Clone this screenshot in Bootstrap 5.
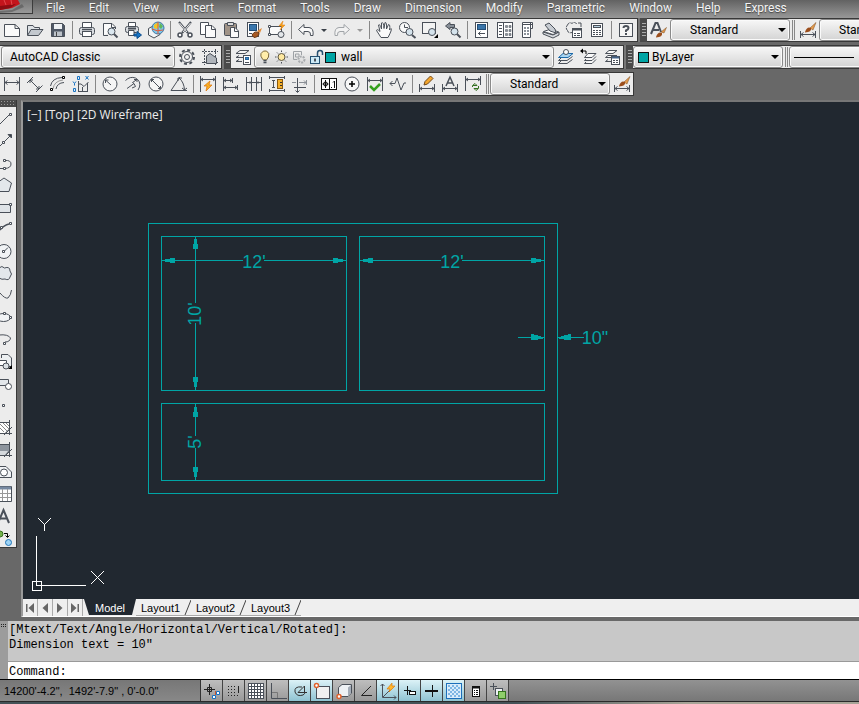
<!DOCTYPE html>
<html lang="en">
<head>
<meta charset="utf-8">
<meta name="viewport" content="width=device-width, initial-scale=1">
<title>AutoCAD Classic</title>
<link href="https://cdn.jsdelivr.net/npm/bootstrap@5.3.0/dist/css/bootstrap.min.css" rel="stylesheet">
<style>
:root{--ink:#4a5059;--panel:#ececec;--desk:#686868;--wall:#00a5a5;--paper:#212830}
body{font-family:Roboto,"Liberation Sans",sans-serif;font-size:12px;line-height:16px;color:#000;background:var(--desk)}
button{border:0;background:none;padding:0;color:inherit;font:inherit}
svg{display:block;flex:none}
.menubar{height:18px;background:linear-gradient(#626262,#989898)}
.menubar nav{gap:24px;padding-left:13px}
.menubar nav a{color:#f4f4f4;text-decoration:none;line-height:16px;text-shadow:0 1px 1px #444}
.logo-btn{width:33px;height:14px;border-right:1px solid #3c3c3c;border-bottom:1px solid #3c3c3c;background:linear-gradient(#777,#999)}
.bars{gap:3px}
.bar-row{height:24px}
.tool-panel{height:24px;background:var(--panel);border-top:1px solid #383838;border-bottom:1px solid #383838}
.tool-panel.closed{border-right:1px solid #383838}
.tool-panel.inset-start{padding-left:1px}
.tool-btn{width:23px;height:22px;display:flex;align-items:center;justify-content:center;flex:none}
.tool-btn svg,.status-btn svg,.draw-btn svg,.layer-state svg{fill:none;stroke:var(--ink);stroke-width:1}
.tool-btn svg{width:20px;height:20px}
.tool-drop{width:13px;height:22px;display:flex;align-items:center;justify-content:center;flex:none}
.tool-drop::after{content:"";border:3px solid transparent;border-top-color:#3a4048;border-bottom:0}
.tool-drop.off::after{border-top-color:#999}
.rule{width:6px;flex:none;display:flex;justify-content:center;align-items:center}
.rule::after{content:"";width:1px;height:18px;background:#888}
.rule.double::after{width:3px;height:20px;background:none;border-left:1px solid #888;border-right:1px solid #888}
.grip{width:9px;flex:none;height:24px;padding:4px 2px;background:#4a4a4a;border-left:2px solid #777;background-clip:padding-box}
.grip::after{content:"";display:block;width:4px;height:15px;background:radial-gradient(circle,#aaa 0 28%,transparent 30%) 0 0/2px 3px}
.combo{position:relative;height:22px;flex:none}
.combo select{appearance:none;width:100%;height:22px;border:1px solid #8a8a8a;border-radius:3px;background:linear-gradient(#f7f7f7,#e4e4e4 55%,#d4d4d4);box-shadow:inset 0 0 0 1px #fafafa;font:inherit;line-height:16px;color:#000;padding:0 0 0 8px}
.combo::after{content:"";position:absolute;right:4px;top:9px;border:4px solid transparent;border-top:4px solid #000;border-bottom:0;pointer-events:none}
.combo.w-md{width:120px}.combo.w-lg{width:150px}.combo.w-ws{width:174px}.combo.w-layer{width:300px}
.combo.mid select{padding-left:19px}
.combo.w-layer select{padding-left:86px}
.combo.tint select{padding-left:18px}
.layer-state{position:absolute;left:3px;top:3px;display:flex;gap:1px;pointer-events:none}
.swatch{position:absolute;left:5px;top:6px;width:11px;height:11px;background:var(--wall);border:1px solid #111;pointer-events:none}
.w-layer .swatch{left:71px}
.sample{position:absolute;left:5px;width:60px;top:11px;height:1px;background:#000;pointer-events:none}
.draw-bar{width:17px;background:var(--panel);border-right:1px solid #383838;border-bottom:1px solid #383838}
.draw-grip{height:7px;background:radial-gradient(circle,#999 0 28%,transparent 30%) 0 0/3px 3px #4a4a4a}
.draw-btn{height:22px;overflow:hidden;text-align:left}
.work{padding-top:4px;gap:4px;min-height:0}
.sheet{border:solid #9a9a9a;border-width:2px 0 1px 2px;border-top-color:#777;border-bottom-color:#fff;min-width:0}
.sheet,.canvas{min-height:0}
.canvas{background:var(--paper);position:relative;overflow:hidden}
.canvas .plan{width:100%;height:100%;position:absolute;left:0;top:0}
.ucs{position:absolute;left:8px;bottom:8px}
.view-label{position:relative;z-index:1;color:#ececec;font-family:"Open Sans","Noto Sans",sans-serif;font-size:12px;padding:5px 4px}
.tabs{height:17px;background:#efefef;font-family:"Liberation Sans",Arial,sans-serif;font-size:11px;line-height:18px}
.step{width:15px;height:17px;border-right:1px solid #aaa;display:flex;align-items:center;justify-content:center}
.tab-model{width:52px;height:16px;background:var(--paper);color:#fff;clip-path:polygon(0 0,100% 0,48px 100%,5px 100%);margin-left:1px}
.tab-layout{width:55px;height:17px;padding-left:5px;display:flex;justify-content:space-between;border-bottom:1px solid #aaa}
.prompt{margin-top:4px;background:#9c9c9c;font-family:"Liberation Mono","Courier New",monospace;font-size:12px;line-height:15px}
.prompt-grip{width:8px;padding-top:3px}
.prompt-grip::after{content:"";display:block;width:6px;height:4px;background:conic-gradient(#222 25%,transparent 0) 0 0/2px 2px}
.history{height:41px;background:#c8c8c8;border-bottom:1px solid #999;padding:2px 1px 0}
.entry{height:17px;background:#fff;padding-left:1px;line-height:21px}
.entry input{border:0;outline:0;padding:0;height:16px;background:transparent;font:inherit}
.status{height:23px;border-top:1px solid #000;border-bottom:1px solid #2a2a2a;background:linear-gradient(#929292,#777)}
.coords{width:201px;font-family:"Liberation Sans",Arial,sans-serif;font-size:11px;line-height:23px;padding-left:4px;background:linear-gradient(#777,#888);border-right:1px solid #333;white-space:pre}
.status-btn{width:22px;height:21px;border-right:1px solid #444;background:linear-gradient(#bebebe,#999);display:flex;align-items:center;justify-content:center}
.status-btn.on{background:linear-gradient(#dcf2f7,#8fc3d2)}
.edge{height:2px;background:linear-gradient(90deg,#445257 0 60%,#a7a497 80%)}
</style>
<script src="https://cdn.jsdelivr.net/npm/bootstrap@5.3.0/dist/js/bootstrap.bundle.min.js"></script>
</head>
<body class="vh-100 d-flex flex-column overflow-hidden">

<header class="menubar d-flex flex-shrink-0">
  <button class="logo-btn" aria-label="Application menu"><svg width="32" height="13"><path d="M0 11 12 10 22 4 24 7 12 12 0 13Z" fill="#555" opacity=".6"/><path d="M0 0H18L20 4 12 8 0 10Z" fill="#c4151c"/><path d="M0 6 8 5 16 4 10 8 0 10Z" fill="#8d0d12"/><path d="M4 0 6 5M11 0 12 5" stroke="#e4484d"/></svg></button>
  <nav class="d-flex" aria-label="Main menu">
    <a href="#">File</a><a href="#">Edit</a><a href="#">View</a><a href="#">Insert</a><a href="#">Format</a><a href="#">Tools</a><a href="#">Draw</a><a href="#">Dimension</a><a href="#">Modify</a><a href="#">Parametric</a><a href="#">Window</a><a href="#">Help</a><a href="#">Express</a>
  </nav>
</header>

<div class="bars d-flex flex-column flex-shrink-0">
  <div class="bar-row d-flex overflow-hidden">
    <div class="tool-panel closed d-flex flex-shrink-0" role="toolbar" aria-label="Standard">
      <button class="tool-btn" aria-label="New"><svg viewBox="0 0 20 20"><path d="M2.500 4.500H13L17.500 8.500V16.500H2.500Z" fill="#fafafa"/><path d="M13 4.500V8.500H17.500"/></svg></button>
      <button class="tool-btn" aria-label="Open"><svg viewBox="0 0 20 20"><path d="M2.500 15V5.500H8L9.500 7.500H14.500V9" fill="#dde1e5"/><path d="M2.500 15.500 6 9.500H18L13.500 15.500Z" fill="#c3c8ce"/></svg></button>
      <button class="tool-btn" aria-label="Save"><svg viewBox="0 0 20 20"><path d="M3.500 3.500H14.500L16.500 5.500V16.500H3.500Z" fill="#4f5866"/><path d="M6 4H14V9H6Z" fill="#eef1f4" stroke="none"/><path d="M6 11.500H14V16H6Z" fill="#bcc2c9" stroke="none"/><path d="M8.500 12V16" stroke="#444"/></svg></button>
      <span class="rule"></span>
      <button class="tool-btn" aria-label="Plot"><svg viewBox="0 0 20 20"><path d="M5.500 8V2.500H14.500V8" fill="#fff"/><rect x="2.500" y="7.500" width="15" height="7" rx="2" fill="#dadde1"/><rect x="5.500" y="11.500" width="9" height="5" fill="#fff"/><path d="M5 9.500H15" stroke-width="1.500"/></svg></button>
      <button class="tool-btn" aria-label="Plot preview"><svg viewBox="0 0 20 20"><path d="M3.500 15.500V3.500H12L15.500 7V9" fill="#fafafa"/><path d="M3.500 15.500H8M11.500 4V7.500H15"/><circle cx="11.500" cy="11.500" r="3.500" fill="#dbe7ef"/><path d="M14 14 17.500 17.500" stroke-width="2"/></svg></button>
      <button class="tool-btn" aria-label="Publish"><svg viewBox="0 0 20 20"><path d="M5.500 7V2.500H12.500V7" fill="#fff"/><rect x="2.500" y="6.500" width="13" height="6" rx="2" fill="#dadde1"/><path d="M5.500 10.500H11V15.500H5.500Z" fill="#fff"/><path d="M5 8.500H13" stroke-width="2"/><path d="M11 14H14V11.500L18.500 15 14 18.500V16H11Z" fill="#1673c4" stroke="#0b4c8c"/></svg></button>
      <button class="tool-btn" aria-label="3D DWF"><svg viewBox="0 0 20 20"><path d="M2.500 8.500 8 5.500 14 8.500V14.500L8 18 2.500 15Z" fill="#f2f4f6"/><circle cx="12" cy="8" r="6" fill="#7cc7ea" stroke="#4576a0"/><path d="M8 5Q12 1 13 5L11 9 8 8Z" fill="#f2c526" stroke="none"/><path d="M14 3 17 6 15 9 13 7Z" fill="#5fb65a" stroke="none"/><path d="M6 9Q11 12 17 10M12 2V14" stroke="#e05a3a"/></svg></button>
      <span class="rule"></span>
      <button class="tool-btn" aria-label="Cut"><svg viewBox="0 0 20 20"><path d="M4 2 13 13M16 2 7 13" stroke-width="2"/><path d="M4.500 3 12 12M15.500 3 8 12" stroke="#eee"/><circle cx="5" cy="15" r="2" fill="#fff" stroke-width="1.500"/><circle cx="15" cy="15" r="2" fill="#fff" stroke-width="1.500"/></svg></button>
      <button class="tool-btn" aria-label="Copy"><svg viewBox="0 0 20 20"><path d="M2.500 2.500H10.500V14.500H2.500Z" fill="#fff"/><path d="M7.500 5.500H14L17.500 9V17.500H7.500Z" fill="#fafafa"/><path d="M13.500 5.500V9.500H17"/></svg></button>
      <button class="tool-btn" aria-label="Paste"><svg viewBox="0 0 20 20"><rect x="3.500" y="3.500" width="12" height="12" rx="1" fill="#a09387"/><path d="M6.500 2.500H12.500V5.500H6.500Z" fill="#ddd"/><path d="M9.500 7.500H14L17.500 11V17.500H9.500Z" fill="#fafafa"/><path d="M13.500 7.500V11.500H17"/></svg></button>
      <button class="tool-btn" aria-label="Match properties"><svg viewBox="0 0 20 20"><rect x="3.500" y="2.500" width="11" height="14" fill="#fff"/><rect x="5.500" y="4.500" width="7" height="6" fill="#3977ae" stroke="#234d75"/><path d="M5 13.500H8"/><path d="M13 11 18 8 16 13Z" fill="#e38b38" stroke="none"/><path d="M8 15Q11 10 15 13 15 17 10 17.500Z" fill="#a85a24" stroke="#6d3a16"/></svg></button>
      <button class="tool-btn" aria-label="Block editor"><svg viewBox="0 0 20 20"><path d="M2.500 6.500H14.500V14.500H2.500Z" fill="#fafafa"/><circle cx="14" cy="14.500" r="3" fill="#e4e7ea"/><path d="M1.500 5.500H3.500V7.500H1.500ZM1.500 13.500H3.500V15.500H1.500Z" fill="#fff"/><path d="M16 1 12 6H15L13 10 18 5H15Z" fill="#f8a51b" stroke="#e07b0a" stroke-width=".5"/></svg></button>
      <span class="rule"></span>
      <button class="tool-btn" aria-label="Undo"><svg viewBox="0 0 20 20"><path d="M2.500 9.500 8 4.500V7.500H13Q18 8 17 15.500H14.500Q15 11.500 12 11.500H8V14.500Z" fill="#fafafa"/></svg></button><button class="tool-drop" aria-label="Undo list"></button>
      <button class="tool-btn" aria-label="Redo"><svg viewBox="0 0 20 20"><path d="M17.500 9.500 12 4.500V7.500H7Q2 8 3 15.500H5.500Q5 11.500 8 11.500H12V14.500Z" fill="#f2f2f2" stroke="#a0a4a8"/></svg></button><button class="tool-drop off" aria-label="Redo list"></button>
      <span class="rule"></span>
      <button class="tool-btn" aria-label="Pan"><svg viewBox="0 0 20 20"><path d="M7 17.500 2.500 10.500Q3 8.500 6 11.500L4.500 5Q6 3.500 7.500 9L7.500 3Q9.500 1 10 8.500L11 2.500Q13 2 12.500 9L14.500 4.500Q16.500 4.500 15.500 10L17 8.500Q18.500 9 14 17.500Z" fill="#fafafa"/></svg></button>
      <button class="tool-btn" aria-label="Zoom realtime"><svg viewBox="0 0 20 20"><circle cx="7.500" cy="7.500" r="5" fill="#fafafa"/><path d="M7.500 4.500V7.500H11"/><circle cx="12.500" cy="12" r="3.500" fill="#d5e3ec"/><path d="M15 15 18.500 18" stroke-width="2"/></svg></button>
      <button class="tool-btn" aria-label="Zoom window"><svg viewBox="0 0 20 20"><rect x="2.500" y="2.500" width="13" height="11" fill="#f3f3f3"/><circle cx="12" cy="12" r="3.500" fill="#d5e3ec"/><path d="M18 14V18H14Z" fill="#000" stroke="none"/></svg></button>
      <button class="tool-btn" aria-label="Zoom previous"><svg viewBox="0 0 20 20"><path d="M2.500 6 7 2.500V4.500H11.500V7.500H7V9.500Z" fill="#888f98"/><circle cx="11.500" cy="11.500" r="3.500" fill="#d5e3ec"/><path d="M14 14 17.500 17.500" stroke-width="2"/></svg></button>
      <span class="rule"></span>
      <button class="tool-btn" aria-label="Properties"><svg viewBox="0 0 20 20"><rect x="3.500" y="2.500" width="12" height="15" fill="#fff"/><rect x="5.500" y="4.500" width="8" height="5" fill="#3874a9" stroke="#234d75"/><path d="M6 13.500H13M8.500 11.500 6.500 13.500 8.500 15.500"/></svg></button>
      <button class="tool-btn" aria-label="DesignCenter"><svg viewBox="0 0 20 20"><rect x="2.500" y="2.500" width="15" height="15" fill="#fff"/><path d="M8.500 3V17"/><path d="M4 5.500H7M4 8.500H7M4 11.500H7M4 14.500H7"/><path d="M10.500 5.500H12.500V7.500H10.500ZM14 5.500H16V7.500H14ZM10.500 9.500H12.500V11.500H10.500ZM14 9.500H16V11.500H14ZM10.500 13.500H12.500V15.500H10.500ZM14 13.500H16V15.500H14Z" fill="#8c939c" stroke-width=".5"/></svg></button>
      <button class="tool-btn" aria-label="Tool palettes"><svg viewBox="0 0 20 20"><path d="M4.500 2.500H14.500V8.500H12.500V17.500H4.500Z" fill="#fff"/><path d="M12.500 3V17M5 4.500H14"/><path d="M7 7V16M10 7V16" stroke-dasharray="2 1" stroke-width="2" stroke="#8c939b"/></svg></button>
      <button class="tool-btn" aria-label="Sheet set manager"><svg viewBox="0 0 20 20"><path d="M2 12 12 15 18 12 18 15 12 18 2 14Z" fill="#d9dce0"/><path d="M2.500 11.500 10 9 17.500 12 12 14.500Z" fill="#fff"/><path d="M4 5 8 3 14 9 15 13 9 11Z" fill="#c7ccd2"/></svg></button>
      <button class="tool-btn" aria-label="Markup set manager"><svg viewBox="0 0 20 20"><path d="M3.500 5Q5 1.500 8 3.500 11 1 13 4.500M3.500 10.500Q1 8 3.500 5M3.500 10.500Q4 13.500 8 12.500" stroke-dasharray="3 1"/><rect x="8.500" y="8.500" width="9" height="9" fill="#fff"/><path d="M9 9.500H17" stroke-width="2"/><path d="M10 13.500H12M13 13.500H16M10 15.500H12M13 15.500H16M14 3H17V7"/></svg></button>
      <button class="tool-btn" aria-label="Calculator"><svg viewBox="0 0 20 20"><rect x="4.500" y="3.500" width="11" height="13" fill="#fff"/><rect x="6.500" y="5.500" width="7" height="2" fill="#b9d1e0"/><path d="M6 10.500H14M6 12.500H14M6 14.500H14" stroke-dasharray="2 1"/></svg></button>
      <span class="rule"></span>
      <button class="tool-btn" aria-label="Help"><svg viewBox="0 0 20 20"><rect x="3.500" y="3.500" width="13" height="13" fill="#f6f6f6"/><path d="M7.500 8Q7.500 6 10 6 12.500 6 12.500 8 12.500 9.500 10 10.500V12M10 13V15" stroke-width="2"/></svg></button>
    </div>
    <div class="grip"></div>
    <div class="tool-panel d-flex flex-grow-1" role="toolbar" aria-label="Styles">
      <button class="tool-btn" aria-label="Text style"><svg viewBox="0 0 20 20"><path d="M2 14 6.500 3H8.500L12 12M4 10H10" stroke-width="2"/><path d="M12 12 17.500 7.500 15 13Z" fill="#e39a4c" stroke="#7a4b1e" stroke-width=".5"/><path d="M7 17Q9 11 13 13 14 17 7 17.500Z" fill="#9b4e1c" stroke="none"/></svg></button>
      <div class="combo w-md mid"><select aria-label="Text style list"><option>Standard</option></select></div>
      <span class="rule double"></span>
      <button class="tool-btn" aria-label="Dimension style"><svg viewBox="0 0 20 20"><path d="M2.500 11V18M17.500 11V18M3 14.500H17M5.500 12.500 3 14.500 5.500 16.500M14.500 12.500 17 14.500 14.500 16.500"/><path d="M12 8 18 2.500 15 10Z" fill="#e39a4c" stroke="#7a4b1e" stroke-width=".5"/><path d="M7 12Q9 6 13 8 14 12 7 12.500Z" fill="#9b4e1c" stroke="none"/></svg></button>
      <div class="combo w-md mid"><select aria-label="Dimension style list"><option>Standard</option></select></div>
    </div>
  </div>

  <div class="bar-row d-flex overflow-hidden">
    <div class="tool-panel closed inset-start d-flex flex-shrink-0" role="toolbar" aria-label="Workspaces">
      <div class="combo w-ws"><select aria-label="Workspace"><option>AutoCAD Classic</option></select></div>
      <button class="tool-btn" aria-label="Workspace settings"><svg viewBox="0 0 20 20"><circle cx="10" cy="10" r="7" stroke-width="2" stroke-dasharray="3 2.500"/><circle cx="10" cy="10" r="5.500" fill="#f2f2f2"/><circle cx="10" cy="10" r="2.500"/></svg></button>
      <button class="tool-btn" aria-label="My workspace"><svg viewBox="0 0 20 20"><path d="M2 4.500H18M2 15.500H18M4.500 2V18M15.500 2V18" stroke-dasharray="2 1"/><path d="M6.500 16.500V9L10 6.500 16.500 11V16.500Z" fill="#b0b5bb"/></svg></button>
    </div>
    <div class="grip"></div>
    <div class="tool-panel closed d-flex flex-shrink-0" role="toolbar" aria-label="Layers">
      <button class="tool-btn" aria-label="Layer properties"><svg viewBox="0 0 20 20"><path d="M3 6.500H12L16 3.500H7ZM3 10.500H11M3 14.500H9M3 10.500 6 8.500M3 14.500 6 12.500" fill="#f4f4f4"/><rect x="10.500" y="8.500" width="7" height="9" fill="#fff"/><rect x="12.500" y="10.500" width="3" height="2" fill="#3f86c0" stroke="#25649c"/><path d="M12 15.500H16"/></svg></button>
      <div class="combo w-layer"><select aria-label="Layer"><option>wall</option></select>
        <span class="layer-state">
          <svg width="16" height="16"><path d="M5.500 10Q3 7 4 4.500 6 1 9.500 2 13 4 11.500 8L9.500 11H6.500Z" fill="#ffedaa" stroke="#7b673d"/><path d="M6.500 11.500H9.500M6.500 13.500H9.500" stroke-width="1.500"/></svg>
          <svg width="16" height="16"><circle cx="7.500" cy="8" r="3.500" fill="#ffe9a0" stroke="#5c5540"/><path d="M7.500 1.500V3M7.500 13V14.500M1 8H2.500M12.500 8H14M3 3.500 4 4.500M12 3.500 11 4.500M3 12.500 4 11.500M12 12.500 11 11.500"/></svg>
          <svg width="16" height="16"><path d="M2.500 2.500H10.500V6M2.500 2.500V10.500H6M4.500 5H8V8H4.500Z" stroke="#9ea2a6"/><circle cx="10.500" cy="10.500" r="3" stroke="#a8abae" stroke-width="2" stroke-dasharray="2 1"/></svg>
          <svg width="16" height="16"><path d="M9.500 7V4Q9.500 1.500 12 1.500 14.500 1.500 14.500 4V6" stroke-width="1.500" stroke="#255070"/><rect x="2.500" y="7.500" width="9" height="7" fill="#cdeaf7" stroke="#255070"/><path d="M7 9.500V12.500" stroke-width="2"/></svg>
        </span><span class="swatch"></span></div>
      <button class="tool-btn" aria-label="Make object's layer current"><svg viewBox="0 0 20 20"><path d="M2.500 16.500H11L16.500 12.500M2.500 13.500H11L16.500 9.500M2.500 16.500 5 14M2.500 13.500 5 11"/><path d="M2.500 10.500 7 6.500H17L12 10.500Z" fill="#a9d4f1" stroke="#1c69a8"/><circle cx="10" cy="5" r="2.500" fill="#fff"/></svg></button>
      <button class="tool-btn" aria-label="Layer previous"><svg viewBox="0 0 20 20"><path d="M5.500 10.500 9 6.500H17L13 10.500ZM5.500 13.500H13L17 9.500M5.500 16.500H13L17 12.500M5.500 13.500 7 12M5.500 16.500 7 15" fill="#fafafa"/><path d="M2 4H7V7" fill="none" stroke="#000"/><path d="M1 4 4 1.500V6.500Z" fill="#000" stroke="none"/></svg></button>
      <button class="tool-btn" aria-label="Layer states manager"><svg viewBox="0 0 20 20"><path d="M3.500 6.500 7 3.500H15L11 6.500ZM3.500 10.500H9M3.500 14.500H9M3.500 10.500 6 8.500H15M3.500 14.500 6 12.500" fill="#fafafa"/><rect x="9.500" y="9.500" width="8" height="8" fill="#fff"/><path d="M10 10.500H17" stroke-width="2" stroke="#43638a"/><path d="M11 13.500H13M14 13.500H16M11 15.500H13M14 15.500H16"/></svg></button>
    </div>
    <div class="grip"></div>
    <div class="tool-panel d-flex flex-grow-1" role="toolbar" aria-label="Properties bar">
      <div class="combo w-lg tint"><select aria-label="Colour"><option>ByLayer</option></select><span class="swatch"></span></div>
      <span class="rule double"></span>
      <div class="combo w-lg"><select aria-label="Linetype"><option></option></select><span class="sample"></span></div>
    </div>
  </div>

  <div class="bar-row d-flex overflow-hidden">
    <div class="tool-panel closed d-flex flex-shrink-0" role="toolbar" aria-label="Dimension">
      <button class="tool-btn" aria-label="Linear"><svg viewBox="0 0 20 20"><path d="M2.500 3V17M17.500 3V17M3 8.500H17M5.500 6.500 3 8.500 5.500 10.500M14.500 6.500 17 8.500 14.500 10.500"/></svg></button>
      <button class="tool-btn" aria-label="Aligned"><svg viewBox="0 0 20 20"><path d="M2 9 8 3M11 18 17.500 11.500M5 6 14 15M5 9V6H8M14 12V15H11"/></svg></button>
      <button class="tool-btn" aria-label="Arc length"><svg viewBox="0 0 20 20"><path d="M2.500 12Q4 4 14 3.500M8 15Q9 9 16 8.500"/><path d="M5 15Q6 7 15 6" stroke="#999"/><path d="M2.500 14.500H4.500V16.500H2.500ZM14.500 2.500H16.500V4.500H14.500Z" fill="#fff" stroke="#000"/></svg></button>
      <button class="tool-btn" aria-label="Ordinate"><svg viewBox="0 0 20 20"><path d="M6.500 2.500H8.500V5.500H6.500ZM14.500 2 17.500 5.500M17.500 2 14.500 5.500M2 7.500 3.500 9.500 5 7.500M3.500 9.500V11.500M2.500 14.500H4.500V17.500H2.500Z" stroke="#1673c4"/><path d="M7.500 7V17M7.500 10H10L13 12.500 17.500 8M11.500 13V17M16.500 9V17M7 17.500H17"/></svg></button>
      <span class="rule"></span>
      <button class="tool-btn" aria-label="Radius"><svg viewBox="0 0 20 20"><circle cx="10" cy="10" r="7" fill="#f5f5f5"/><path d="M5.500 6 11 11M5.500 9V6H8.500"/></svg></button>
      <button class="tool-btn" aria-label="Jogged"><svg viewBox="0 0 20 20"><path d="M2.500 6.500Q7 2 12.500 4 18 7 16.500 13L15 16M4 14.500 11 9.500 9.500 8.500 14 5.500M14 8V5.500H11M11 9.500 12.500 12.500 9 14"/></svg></button>
      <button class="tool-btn" aria-label="Diameter"><svg viewBox="0 0 20 20"><circle cx="10" cy="10" r="7" fill="#f5f5f5"/><path d="M5.500 5.500 14.500 14.500M5.500 8V5.500H8M14.500 12V14.500H12"/></svg></button>
      <button class="tool-btn" aria-label="Angular"><svg viewBox="0 0 20 20"><path d="M2 16.500H18M2 16.500 11 3M10 4Q15 8 15.500 16M9 7V4H13M13 14 15.500 16 18 14"/></svg></button>
      <span class="rule"></span>
      <button class="tool-btn" aria-label="Quick dimension"><svg viewBox="0 0 20 20"><path d="M2.500 2V18M17.500 2V18M3 5.500H17M5 4 3 5.500 5 7M15 4 17 5.500 15 7"/><path d="M12 7 6 12H9L8 17 14 11H11Z" fill="#f9ae22" stroke="#dc7208" stroke-width=".7"/></svg></button>
      <button class="tool-btn" aria-label="Baseline"><svg viewBox="0 0 20 20"><path d="M2.500 3V17M11.500 4V9M3 6.500H11M3 13.500H16M16.500 11V16M5 5 3 6.500 5 8M9 5 11 6.500 9 8M5 12 3 13.500 5 15M14 12 16 13.500 14 15"/></svg></button>
      <button class="tool-btn" aria-label="Continue"><svg viewBox="0 0 20 20"><path d="M2.500 3V17M7.500 3V17M12.500 3V17M17.500 3V17M3 8.500H17"/><path d="M5.500 7 7 8.500 5.500 10M14.500 7 13 8.500 14.500 10" stroke-width=".7"/></svg></button>
      <button class="tool-btn" aria-label="Dimension space"><svg viewBox="0 0 20 20"><path d="M2 3.500H18M2 16.500H18M2.500 2V5M17.500 2V5M2.500 15V18M17.500 15V18M6.500 6V14M5 6.500H8M5 13.500H8"/><rect x="10.500" y="5.500" width="5" height="9" fill="#f6b02a" stroke="#8a5a10"/><path d="M13 8.500H15M13 11.500H15" stroke="#333"/></svg></button>
      <button class="tool-btn" aria-label="Dimension break"><svg viewBox="0 0 20 20"><path d="M2 8.500H6M9 8.500H16M16.500 6V11M14 6.500 16 8.500 14 10.500" stroke="#8a8f96"/><path d="M7.500 4V13M4 13.500H16M7.500 14V18M5.500 16.500 7.500 18.500 9.500 16.500"/></svg></button>
      <span class="rule"></span>
      <button class="tool-btn" aria-label="Tolerance"><svg viewBox="0 0 20 20"><rect x="2.500" y="4.500" width="15" height="11" fill="#fff" stroke="#111"/><path d="M10.500 5V15M3.500 10H9.500M6.500 6V14M12 13.500H13M15.500 7V14M14 8.500 15.500 7" stroke="#111"/><circle cx="6.500" cy="10" r="2" stroke="#111"/></svg></button>
      <button class="tool-btn" aria-label="Center mark"><svg viewBox="0 0 20 20"><circle cx="10" cy="10" r="7" fill="#f7f7f7"/><path d="M7 10H13M10 7V13" stroke="#000" stroke-width="1.500"/></svg></button>
      <button class="tool-btn" aria-label="Inspection"><svg viewBox="0 0 20 20"><path d="M2.500 3V17M17.500 3V17M3 6.500H17M5 5 3 6.500 5 8M15 5 17 6.500 15 8"/><path d="M5 12 9 16 15 10" stroke="#35a01f" stroke-width="2.500"/></svg></button>
      <button class="tool-btn" aria-label="Jogged linear"><svg viewBox="0 0 20 20"><path d="M2 9.500H7L9 4 13 16 16 9H18M4.500 7 2 9.500 4.500 12"/></svg></button>
      <span class="rule"></span>
      <button class="tool-btn" aria-label="Dimension edit"><svg viewBox="0 0 20 20"><path d="M2.500 10V18M17.500 10V18M3 14.500H17M5 13 3 14.500 5 16M15 13 17 14.500 15 16"/><path d="M7 11 8 7.500 13.500 2 16 4.500 10.500 10Z" fill="#f5a62b" stroke="#70481a"/></svg></button>
      <button class="tool-btn" aria-label="Dimension text edit"><svg viewBox="0 0 20 20"><path d="M2.500 10V18M17.500 10V18M3 14.500H17M5 13 3 14.500 5 16M15 13 17 14.500 15 16"/><path d="M6 12 10 3 14 12M7.500 9H12.500" stroke-width="1.500"/></svg></button>
      <button class="tool-btn" aria-label="Dimension update"><svg viewBox="0 0 20 20"><path d="M2.500 2V17M17.500 2V11M3 5.500H17M5 4 3 5.500 5 7M15 4 17 5.500 15 7"/><path d="M9.500 13V11.500L12 9.500 14 11.500H10M15.500 12V14.500L13 16.500 11 14.500H15" stroke="#347020"/></svg></button>
      <span class="rule double"></span>
      <div class="combo w-md mid"><select aria-label="Dimension style control"><option>Standard</option></select></div>
      <button class="tool-btn" aria-label="Dimension style manager"><svg viewBox="0 0 20 20"><path d="M2.500 11V18M17.500 11V18M3 14.500H17M5.500 12.500 3 14.500 5.500 16.500M14.500 12.500 17 14.500 14.500 16.500"/><path d="M12 8 18 2.500 15 10Z" fill="#e39a4c" stroke="#7a4b1e" stroke-width=".5"/><path d="M7 12Q9 6 13 8 14 12 7 12.500Z" fill="#9b4e1c" stroke="none"/></svg></button>
    </div>
  </div>
</div>

<main class="work d-flex flex-grow-1">
  <div class="draw-bar d-flex flex-column align-self-start flex-shrink-0" role="toolbar" aria-label="Draw">
    <div class="draw-grip"></div>
    <button class="draw-btn" aria-label="Line"><svg width="16" height="22"><path d="M0 17 9.500 7.500"/><path d="M9.500 6.500H11.500V8.500H9.500Z" fill="#fff"/></svg></button>
    <button class="draw-btn" aria-label="Construction line"><svg width="16" height="22"><path d="M0 17 10 7"/><path d="M8 5.500H11.500V9Z" fill="#3a4048"/><path d="M2.500 12.500H4.500V14.500H2.500Z" fill="#fff"/></svg></button>
    <button class="draw-btn" aria-label="Polyline"><svg width="16" height="22"><path d="M5 9.500Q11 9 11 13 11 17 5 17.500H0"/><path d="M3.500 8.500H5.500V10.500H3.500ZM3.500 16.500H5.500V18.500H3.500Z" fill="#fff"/></svg></button>
    <button class="draw-btn" aria-label="Polygon"><svg width="16" height="22"><path d="M4 5 11.500 10 9 18.500H-1L-3 10Z" fill="#e3e7eb"/></svg></button>
    <button class="draw-btn" aria-label="Rectangle"><svg width="16" height="22"><path d="M-1 9.500H10.500V17.500H-1" fill="#dfe3e7"/><path d="M9.500 8.500H11.500V10.500H9.500Z" fill="#fff"/></svg></button>
    <button class="draw-btn" aria-label="Arc"><svg width="16" height="22"><path d="M0 13Q4 8 9 7" stroke-width="1.500"/><path d="M9.500 5.500H11.500V7.500H9.500ZM0.500 9.500H2.500V11.500H0.500Z" fill="#fff"/></svg></button>
    <button class="draw-btn" aria-label="Circle"><svg width="16" height="22"><circle cx="4" cy="12.500" r="7" fill="#f1f3f5"/><path d="M4 12.500 8 8.500"/><path d="M2.500 11.500H4.500V13.500H2.500Z" fill="#fff"/></svg></button>
    <button class="draw-btn" aria-label="Revision cloud"><svg width="16" height="22"><path d="M-1 7Q2 4 4.500 7 10 5 10 10 13 13 10 16 9 20 5 18 2 19-1 17" fill="#e3e7eb"/></svg></button>
    <button class="draw-btn" aria-label="Spline"><svg width="16" height="22"><path d="M0 10Q5 16 8 15 11 12 11.500 7"/></svg></button>
    <button class="draw-btn" aria-label="Ellipse"><svg width="16" height="22"><ellipse cx="3.500" cy="12.500" rx="7" ry="4" fill="#f1f3f5"/><path d="M3.500 7.500H5.500V9.500H3.500ZM9.500 11.500H11.500V13.500H9.500Z" fill="#fff"/></svg></button>
    <button class="draw-btn" aria-label="Ellipse arc"><svg width="16" height="22"><path d="M-1 8Q8 7 10.500 11 10 15 5 15"/><path d="M3.500 15.500H5.500V17.500H3.500Z" fill="#fff"/></svg></button>
    <button class="draw-btn" aria-label="Insert block"><svg width="16" height="22"><path d="M1.500 9V5.500H8L11.500 9V17.500H5" fill="#eceff1"/><path d="M-1 11.500H6.500V16.500H-1" fill="#fff"/><circle cx="6" cy="17" r="3" fill="#dce1e5"/><path d="M8 20 12 16V20Z" fill="#000" stroke="none"/></svg></button>
    <button class="draw-btn" aria-label="Make block"><svg width="16" height="22"><path d="M-1 8.500H8.500V14.500H-1" fill="#e3e7eb"/><circle cx="8.500" cy="15.500" r="3" fill="#fff"/></svg></button>
    <button class="draw-btn" aria-label="Point"><svg width="16" height="22"><path d="M2.500 11.500H4.500V13.500H2.500Z" fill="#fff"/></svg></button>
    <button class="draw-btn" aria-label="Hatch"><svg width="16" height="22"><path d="M-1 7.500H9.500V14L5 18.500H-1" fill="#fff"/><path d="M0 9 8 17M3 8 9 14M6 8 9 11M0 13 4 17" stroke="#888"/><path d="M9.500 5V20M0 18.500H12M4 20 12 12"/></svg></button>
    <button class="draw-btn" aria-label="Gradient"><svg width="16" height="22"><path d="M-1 7.500H9.500V14L5 18.500H-1" fill="#8d949d"/><path d="M0 14H8L5 18H0Z" fill="#d5d9dd" stroke="none"/><path d="M9.500 5V20M0 18.500H12M4 20 12 12"/></svg></button>
    <button class="draw-btn" aria-label="Region"><svg width="16" height="22"><path d="M-1 7.500H6L11.500 13V18.500H-1" fill="#f1f3f5"/><circle cx="4" cy="13.500" r="3.500" fill="#fff"/></svg></button>
    <button class="draw-btn" aria-label="Table"><svg width="16" height="22"><path d="M-1 5.500H11.500V20.500H-1" fill="#fff"/><path d="M0 7H11" stroke-width="3" stroke="#7688a0"/><path d="M0 12.500H11M0 16.500H11M2.500 8V20M7.500 8V20" stroke="#999"/></svg></button>
    <button class="draw-btn" aria-label="Multiline text"><svg width="16" height="22"><path d="M-2 20 3.500 7 9 20M0 15.500H7" stroke-width="2"/></svg></button>
    <button class="draw-btn" aria-label="Add selected"><svg width="16" height="22"><circle cx="0" cy="9" r="3" fill="#72b24a" stroke="#38711f"/><circle cx="8.500" cy="17.500" r="3" fill="#9ed4f6" stroke="#2377b8"/><path d="M4 8.500H7.500V12M5.500 10.500 7.500 12.500 9.500 10.500" stroke="#000"/></svg></button>
  </div>

  <section class="sheet d-flex flex-column flex-grow-1">
    <div class="canvas flex-grow-1">
      <div class="view-label">[−] [Top] [2D Wireframe]</div>
      <svg class="plan" role="img" aria-label="Floor plan with dimensions">
        <g transform="translate(-23 -102)">
          <g fill="none" stroke="#00a5a5" shape-rendering="crispEdges">
            <rect x="148.500" y="223.500" width="409" height="270"/>
            <rect x="161.500" y="236.500" width="185" height="154"/>
            <rect x="359.500" y="236.500" width="185" height="154"/>
            <rect x="161.500" y="403.500" width="383" height="77"/>
            <path d="M162 260.500H243M264 260.500H346M360 260.500H441M462 260.500H544M195.500 237V303M195.500 323V390M195.500 404V436M195.500 448V480M518 337.500H544M558 337.500H584"/>
          </g>
          <g fill="#00a5a5" shape-rendering="crispEdges">
            <path d="M165 259H170V258H175V263H170V262H165ZM343 259H338V258H333V263H338V262H343Z"/>
            <path d="M363 259H368V258H373V263H368V262H363ZM541 259H536V258H531V263H536V262H541Z"/>
            <path d="M194 239V244H193V249H198V244H197V239ZM194 387V382H193V377H198V382H197V387Z"/>
            <path d="M194 407V412H193V417H198V412H197V407ZM194 477V472H193V467H198V472H197V477Z"/>
            <path d="M531 334H534V335H538V336H541V338H543V339H538V340H531ZM571 334H568V335H564V336H561V338H559V339H564V340H571Z"/>
          </g>
          <g fill="#00a5a5" font-family="Liberation Sans, Arial, sans-serif" font-size="18" text-anchor="middle">
            <text x="254" y="268">12'</text>
            <text x="452" y="268">12'</text>
            <text x="595" y="344">10"</text>
            <text transform="translate(201 314) rotate(-90)">10'</text>
            <text transform="translate(201 442) rotate(-90)">5'</text>
          </g>
        </g>
      </svg>
      <svg class="ucs" width="74" height="74" fill="none" stroke="#fff" shape-rendering="crispEdges" role="img" aria-label="UCS axes"><path d="M5.500 19V68.500H55M1.500 64.500H10.500V73.500H1.500ZM7 1 13.500 7.500 20 1M13.500 7V14M60 54 73 67M73 54 60 67"/></svg>
    </div>
    <div class="tabs d-flex flex-shrink-0">
      <button class="step" aria-label="First"><svg width="10" height="10" fill="#666"><path d="M1 1H2.500V9H1ZM9 0V10L3.500 5Z"/></svg></button>
      <button class="step" aria-label="Previous"><svg width="10" height="10" fill="#666"><path d="M8 0V10L2.500 5Z"/></svg></button>
      <button class="step" aria-label="Next"><svg width="10" height="10" fill="#666"><path d="M2 0V10L7.500 5Z"/></svg></button>
      <button class="step" aria-label="Last"><svg width="10" height="10" fill="#666"><path d="M1 0V10L6.500 5ZM7.500 1H9V9H7.500Z"/></svg></button>
      <button class="tab-model">Model</button>
      <button class="tab-layout">Layout1<svg width="7" height="17" stroke="#444"><path d="M1 16 7 1"/></svg></button>
      <button class="tab-layout">Layout2<svg width="7" height="17" stroke="#444"><path d="M1 16 7 1"/></svg></button>
      <button class="tab-layout">Layout3<svg width="7" height="17" stroke="#444"><path d="M1 16 7 1"/></svg></button>
    </div>
  </section>
</main>

<section class="prompt d-flex flex-shrink-0">
  <div class="prompt-grip flex-shrink-0"></div>
  <div class="flex-grow-1">
    <div class="history"><div>[Mtext/Text/Angle/Horizontal/Vertical/Rotated]:</div><div>Dimension text = 10"</div></div>
    <div class="entry d-flex"><label for="cmd">Command:</label><input id="cmd" class="flex-grow-1" type="text"></div>
  </div>
</section>

<footer class="flex-shrink-0">
  <div class="status d-flex">
    <div class="coords">14200'-4.2",  1492'-7.9" , 0'-0.0"</div>
    <button class="status-btn" aria-label="Infer constraints"><svg width="18" height="18"><path d="M1 7.500H12M6.500 2V13M4.500 5.500H8.500V9.500H4.500Z" stroke="#222"/><path d="M13.500 9.500H16.500V12.500H13.500Z" fill="#fff" stroke="#1673c4"/><path d="M9.500 13.500H12.500V16.500H9.500Z" fill="#fff" stroke="#1673c4"/><path d="M12.500 9V13" stroke="#d2562c"/></svg></button>
    <button class="status-btn" aria-label="Snap"><svg width="18" height="18"><path d="M3 4.500H12M3 7.500H12M3 10.500H12M3 13.500H15" stroke="#222" stroke-dasharray="1 2"/><path d="M13.500 4V11" stroke="#222"/></svg></button>
    <button class="status-btn" aria-label="Grid"><svg width="18" height="18"><rect x="1.500" y="1.500" width="15" height="15" fill="#fff"/><path d="M4.500 1V17M7.500 1V17M10.500 1V17M13.500 1V17M1 4.500H17M1 7.500H17M1 10.500H17M1 13.500H17"/></svg></button>
    <button class="status-btn" aria-label="Ortho"><svg width="18" height="18"><path d="M2.500 1V16.500H18"/><path d="M3 10.500H8.500V16" stroke="#777"/></svg></button>
    <button class="status-btn on" aria-label="Polar tracking"><svg width="18" height="18"><path d="M11 5Q3 4 4 10 6 15 12 13 14 12 14 10M7 10.500H16M7 10.500 13.500 4V10" stroke="#333"/></svg></button>
    <button class="status-btn on" aria-label="Object snap"><svg width="18" height="18"><rect x="3.500" y="4.500" width="13" height="12" fill="#f0f0f0"/><circle cx="3.500" cy="3.500" r="2" fill="#fff" stroke="#e0622c" stroke-width="1.500"/></svg></button>
    <button class="status-btn" aria-label="3D object snap"><svg width="18" height="18"><path d="M3.500 5.500 7 2.500H16.500V11L13 14.500H3.500Z" fill="#eef1f4"/><path d="M13 5.500V14L16 11V3Z" fill="#a5adb8" stroke="none"/><circle cx="4" cy="14.500" r="2" fill="#fff" stroke="#e0622c" stroke-width="1.500"/></svg></button>
    <button class="status-btn" aria-label="Object snap tracking"><svg width="18" height="18"><path d="M14 4 4.500 13.500H15" stroke="#222"/></svg></button>
    <button class="status-btn on" aria-label="Dynamic UCS"><svg width="18" height="18"><path d="M3.500 2V15.500H17M1.500 4 3.500 2 5.500 4M15 13.500 17 15.500 15 17.500M4 15 11 8"/><path d="M13 1 8 7H11L10 10 16 4H13Z" fill="#ffb62b" stroke="#d87b11" stroke-width=".7"/></svg></button>
    <button class="status-btn on" aria-label="Dynamic input"><svg width="18" height="18"><path d="M3 8.500H10M6.500 4V13" stroke="#111"/><rect x="8.500" y="9.500" width="6" height="3" fill="#fff" stroke="#111"/></svg></button>
    <button class="status-btn on" aria-label="Lineweight"><svg width="18" height="18"><path d="M2 9H15" stroke="#111" stroke-width="2"/><path d="M9.500 3V15" stroke="#111"/></svg></button>
    <button class="status-btn on" aria-label="Transparency"><svg width="18" height="18"><rect x="1.500" y="1.500" width="15" height="15" fill="#d9ecfa" stroke="#1c6fba"/><path d="M3 4H15M3 8H15M3 12H15" stroke="#7eb6e4" stroke-width="2" stroke-dasharray="2 2"/><path d="M5 6H15M5 10H15M5 14H15" stroke="#7eb6e4" stroke-width="2" stroke-dasharray="2 2"/></svg></button>
    <button class="status-btn" aria-label="Quick properties"><svg width="18" height="18"><rect x="5.500" y="4.500" width="7" height="10" fill="#fff" stroke="#111"/><path d="M5 5.500H13" stroke="#111" stroke-width="2"/><path d="M7 8.500H8M9 8.500H11M7 10.500H8M9 10.500H11M7 12.500H8M9 12.500H11" stroke="#111"/></svg></button>
    <button class="status-btn" aria-label="Selection cycling"><svg width="18" height="18"><path d="M1 4.500H8M4.500 1V8"/><rect x="6.500" y="6.500" width="7" height="7" fill="#eef1f4"/><rect x="9.500" y="9.500" width="7" height="7" fill="#8fce6a" stroke="#35731d"/></svg></button>
  </div>
  <div class="edge"></div>
</footer>
</body>
</html>
